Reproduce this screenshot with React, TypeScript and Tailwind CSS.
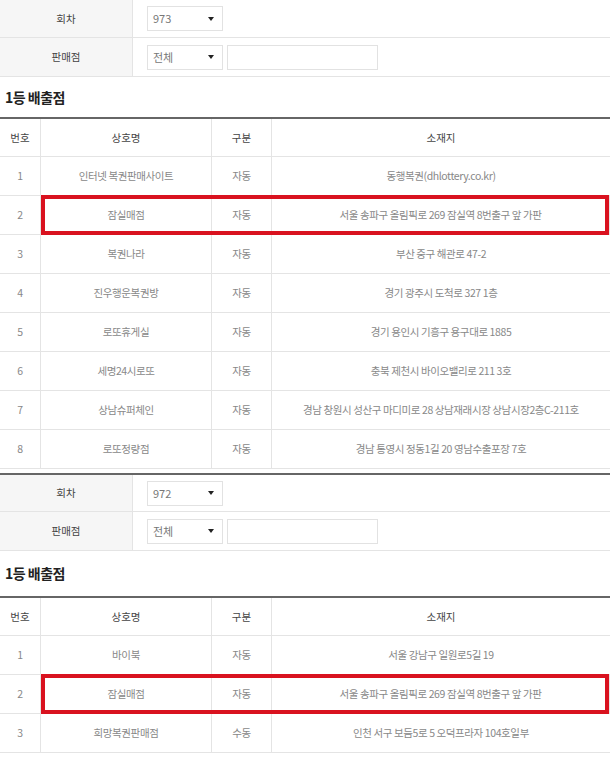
import type { ReactNode } from "react";

type Shop = {
  no: number;
  name: string;
  kind: string;
  addr: string;
  marked?: boolean;
};

const round973: Shop[] = [
  { no: 1, name: "인터넷 복권판매사이트", kind: "자동", addr: "동행복권(dhlottery.co.kr)" },
  { no: 2, name: "잠실매점", kind: "자동", addr: "서울 송파구 올림픽로 269 잠실역 8번출구 앞 가판", marked: true },
  { no: 3, name: "복권나라", kind: "자동", addr: "부산 중구 해관로 47-2" },
  { no: 4, name: "진우행운복권방", kind: "자동", addr: "경기 광주시 도척로 327 1층" },
  { no: 5, name: "로또휴게실", kind: "자동", addr: "경기 용인시 기흥구 용구대로 1885" },
  { no: 6, name: "세명24시로또", kind: "자동", addr: "충북 제천시 바이오밸리로 211 3호" },
  { no: 7, name: "상남슈퍼체인", kind: "자동", addr: "경남 창원시 성산구 마디미로 28 상남재래시장 상남시장2층C-211호" },
  { no: 8, name: "로또정량점", kind: "자동", addr: "경남 통영시 정동1길 20 영남수출포장 7호" },
];

const round972: Shop[] = [
  { no: 1, name: "바이북", kind: "자동", addr: "서울 강남구 일원로5길 19" },
  { no: 2, name: "잠실매점", kind: "자동", addr: "서울 송파구 올림픽로 269 잠실역 8번출구 앞 가판", marked: true },
  { no: 3, name: "희망복권판매점", kind: "수동", addr: "인천 서구 보듬5로 5 오덕프라자 104호일부" },
];

const font = { fontFamily: '"Noto Sans CJK KR", "Noto Sans", sans-serif' };

function SelectBox({ value }: { value: string }) {
  return (
    <div className="flex h-[25px] w-[76px] items-center justify-between border border-[#e2e2e2] bg-white pl-[5px] pr-[8px] text-[11px] text-[#777]">
      <span>{value}</span>
      <span className="h-0 w-0 border-x-[3px] border-t-[4px] border-x-transparent border-t-[#222]" />
    </div>
  );
}

function FormRow({ label, height, children }: { label: string; height: string; children: ReactNode }) {
  return (
    <div className={`flex border-b border-[#e4e4e4] ${height}`}>
      <div className="flex w-[133px] shrink-0 items-center justify-center border-r border-[#e4e4e4] bg-[#f6f6f6] text-[10.5px] text-[#444]">
        {label}
      </div>
      <div className="flex items-center gap-[4px] pl-[14px]">{children}</div>
    </div>
  );
}

const cols = "grid grid-cols-[41px_171px_60px_1fr]";
const cell = "flex items-center justify-center border-r border-[#e4e4e4] last:border-r-0 text-center";

function ShopTable({ rows }: { rows: Shop[] }) {
  return (
    <div className="border-t-2 border-[#666]">
      <div className={`${cols} h-[38px] border-b border-[#e4e4e4] text-[10.5px] text-[#444]`}>
        <div className={cell}>번호</div>
        <div className={cell}>상호명</div>
        <div className={cell}>구분</div>
        <div className={cell}>소재지</div>
      </div>
      {rows.map((r) => (
        <div key={r.no} className={`relative ${cols} h-[39px] border-b border-[#e4e4e4] text-[10.5px] tracking-[-0.4px] text-[#888]`}>
          <div className={cell}>{r.no}</div>
          <div className={cell}>{r.name}</div>
          <div className={cell}>{r.kind}</div>
          <div className={cell}>{r.addr}</div>
          {r.marked && (
            <div className="pointer-events-none absolute bottom-[-1px] left-[41px] right-[1px] top-[-1px] border-[4px] border-[#d9121f]" />
          )}
        </div>
      ))}
    </div>
  );
}

function Section({
  round,
  rows,
  first,
}: {
  round: string;
  rows: Shop[];
  first?: boolean;
}) {
  return (
    <section>
      <div className={first ? "" : "border-t-2 border-[#666]"}>
        <FormRow label="회차" height={first ? "h-[38px]" : "h-[37px]"}>
          <SelectBox value={round} />
        </FormRow>
        <FormRow label="판매점" height="h-[39px]">
          <SelectBox value="전체" />
          <div className="h-[25px] w-[151px] border border-[#e2e2e2] bg-white" />
        </FormRow>
      </div>
      <div className={`flex items-center pl-[5px] text-[14px] font-bold tracking-[-0.5px] text-[#222] ${first ? "h-10" : "h-[45px]"}`}>
        1등 배출점
      </div>
      <ShopTable rows={rows} />
    </section>
  );
}

export default function App() {
  return (
    <div className="w-[610px] bg-white" style={font}>
      <Section round="973" rows={round973} first />
      <div className="h-[4px]" />
      <Section round="972" rows={round972} />
    </div>
  );
}
